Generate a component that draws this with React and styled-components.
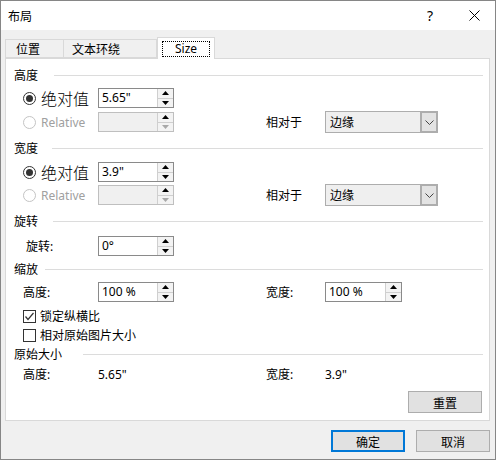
import React from "react";
import styled, { createGlobalStyle } from "styled-components";

const Global = createGlobalStyle`
  html, body { margin: 0; padding: 0; background: #fff; }
  body { font-family: "Noto Sans", "Noto Sans CJK SC", sans-serif; font-size: 12px; color: #000; }
  * { box-sizing: border-box; }
`;

const Window = styled.div`
  width: 496px;
  height: 460px;
  border: 1px solid #868686;
  display: flex;
  flex-direction: column;
  background: #f0f0f0;
`;

const TitleBar = styled.div`
  height: 29px;
  background: #fff;
  display: flex;
  align-items: center;
  padding-left: 7px;
`;

const Title = styled.div`
  font-family: "Noto Sans CJK SC", sans-serif;
  font-size: 12px;
  flex: 1;
`;

const TitleBtn = styled.div`
  width: ${(p) => p.$w}px;
  height: 29px;
  display: flex;
  align-items: center;
  justify-content: center;
  font-size: 14px;
  font-family: "Noto Sans", sans-serif;
`;

const Body = styled.div`
  flex: 1;
  display: flex;
  flex-direction: column;
  padding: 0 5px 0 4px;
`;

const Tabs = styled.div`
  margin-top: 7px;
  height: 21px;
  display: flex;
  align-items: flex-end;
  position: relative;
  z-index: 1;
`;

const Tab = styled.div`
  width: ${(p) => p.$w}px;
  height: ${(p) => (p.$active ? 22 : 19)}px;
  margin-bottom: ${(p) => (p.$active ? -1 : 0)}px;
  background: ${(p) => (p.$active ? "#fff" : "#f0f0f0")};
  border: 1px solid #d9d9d9;
  border-bottom: ${(p) => (p.$active ? "none" : "1px solid #d9d9d9")};
  border-left: ${(p) => (p.$first || p.$active ? "1px solid #d9d9d9" : "none")};
  display: flex;
  align-items: center;
  justify-content: ${(p) => (p.$active ? "center" : "flex-start")};
  padding-left: ${(p) => (p.$active ? 0 : p.$pl)}px;
  padding-top: ${(p) => (p.$active ? 0 : 1)}px;
  font-family: "Noto Sans", "Noto Sans CJK SC", sans-serif;
  font-size: 12px;
`;

const Focus = styled.span`
  border: 1px dotted #000;
  padding: 0 12px;
  height: 16px;
  display: flex;
  align-items: center;
`;

const Panel = styled.div`
  height: 363px;
  background: #fff;
  border: 1px solid #d9d9d9;
  padding: 9px 6px 0 8px;
  display: flex;
  flex-direction: column;
`;

const Header = styled.div`
  height: 14px;
  margin-top: ${(p) => p.$mt || 0}px;
  display: flex;
  align-items: center;
`;

const HeaderText = styled.div`
  width: ${(p) => p.$w}px;
  font-family: "Noto Sans CJK SC", sans-serif;
  font-size: 12px;
  line-height: 14px;
`;

const HeaderLine = styled.div`
  flex: 1;
  height: 1px;
  background: #dcdcdc;
`;

const Row = styled.div`
  display: grid;
  grid-template-columns: 84px 76px 92px 59px 113px;
  align-items: center;
  height: ${(p) => p.$h}px;
  margin-top: ${(p) => p.$mt}px;
`;

const Cell = styled.div`
  display: flex;
  align-items: center;
  padding-left: ${(p) => p.$pl || 0}px;
  grid-column: ${(p) => p.$span || "auto"};
  font-family: "Noto Sans", "Noto Sans CJK SC", sans-serif;
  font-size: 12px;
  color: ${(p) => (p.$dim ? "#a0a0a0" : "#000")};
`;

const Radio = styled.span`
  width: 13px;
  height: 13px;
  border-radius: 50%;
  border: 1px solid ${(p) => (p.$disabled ? "#c4c4c4" : "#333")};
  display: inline-flex;
  align-items: center;
  justify-content: center;
  margin-right: 5px;
  flex: none;
  &::after {
    content: "";
    width: 7px;
    height: 7px;
    border-radius: 50%;
    background: ${(p) => (p.$checked ? "#333" : "transparent")};
  }
`;

const BigLabel = styled.span`
  font-family: "Noto Sans CJK SC", sans-serif;
  font-size: 16px;
  font-weight: 300;
  line-height: 18px;
`;

const Check = styled.span`
  width: 13px;
  height: 13px;
  border: 1px solid #333;
  display: inline-flex;
  align-items: center;
  justify-content: center;
  margin-right: 4px;
  flex: none;
`;

const SpinBox = styled.div`
  width: ${(p) => p.$w || 76}px;
  height: 20px;
  display: flex;
  border: 1px solid ${(p) => (p.$disabled ? "#bfbfbf" : "#8a8a8a")};
  background: ${(p) => (p.$disabled ? "#f0f0f0" : "#fff")};
`;

const SpinValue = styled.div`
  flex: 1;
  padding-left: 3px;
  font-family: "Noto Sans", sans-serif;
  font-size: 12px;
  line-height: 18px;
`;

const SpinButtons = styled.div`
  width: 16px;
  display: flex;
  flex-direction: column;
  border-left: 1px solid #cfcfcf;
  background: #f3f3f3;
`;

const SpinBtn = styled.div`
  flex: 1;
  display: flex;
  align-items: center;
  justify-content: center;
  & + & {
    border-top: 1px solid #cfcfcf;
  }
`;

const Select = styled.div`
  width: 113px;
  height: 22px;
  display: flex;
  border: 1px solid #adadad;
  background: #efefef;
`;

const SelectValue = styled.div`
  flex: 1;
  padding-left: 4px;
  font-family: "Noto Sans CJK SC", sans-serif;
  font-size: 12px;
  line-height: 20px;
`;

const SelectArrow = styled.div`
  width: 18px;
  margin: -1px -1px -1px 0;
  border: 2px solid #adadad;
  background: #e3e3e3;
  display: flex;
  align-items: center;
  justify-content: center;
`;

const ButtonRow = styled.div`
  display: flex;
  justify-content: flex-end;
  gap: 11px;
  margin-top: ${(p) => p.$mt || 0}px;
  padding-right: ${(p) => p.$pr || 0}px;
`;

const Button = styled.div`
  width: ${(p) => p.$w || 74}px;
  height: ${(p) => p.$h || 22}px;
  background: #e1e1e1;
  border: ${(p) => (p.$default ? "2px solid #0078d7" : "1px solid #adadad")};
  display: flex;
  align-items: center;
  justify-content: center;
  font-family: "Noto Sans CJK SC", sans-serif;
  font-size: 12px;
`;

const Up = ({ c = "#000" }) => (
  <svg width="7" height="4" viewBox="0 0 7 4">
    <path d="M0 4 L3.5 0 L7 4 Z" fill={c} />
  </svg>
);
const Down = ({ c = "#000" }) => (
  <svg width="7" height="4" viewBox="0 0 7 4">
    <path d="M0 0 L3.5 4 L7 0 Z" fill={c} />
  </svg>
);

const Spin = ({ value, disabled, w }) => (
  <SpinBox $disabled={disabled} $w={w}>
    <SpinValue>{value}</SpinValue>
    <SpinButtons>
      <SpinBtn>
        <Up />
      </SpinBtn>
      <SpinBtn>
        <Down c={disabled ? "#a8a8a8" : "#000"} />
      </SpinBtn>
    </SpinButtons>
  </SpinBox>
);

const Dropdown = ({ value }) => (
  <Select>
    <SelectValue>{value}</SelectValue>
    <SelectArrow>
      <svg width="9" height="5" viewBox="0 0 9 5">
        <path d="M0.5 0.5 L4.5 4.5 L8.5 0.5" fill="none" stroke="#444" strokeWidth="1" />
      </svg>
    </SelectArrow>
  </Select>
);

const CheckMark = () => (
  <svg width="11" height="11" viewBox="0 0 11 11">
    <path d="M1.5 5.5 L4 8.5 L9.5 2" fill="none" stroke="#333" strokeWidth="1.2" />
  </svg>
);

export default function App() {
  return (
    <>
      <Global />
      <Window>
        <TitleBar>
          <Title>布局</Title>
          <TitleBtn $w={46}>?</TitleBtn>
          <TitleBtn $w={42}>
            <svg width="11" height="11" viewBox="0 0 11 11">
              <path d="M0.5 0.5 L10.5 10.5 M10.5 0.5 L0.5 10.5" stroke="#000" strokeWidth="1" />
            </svg>
          </TitleBtn>
        </TitleBar>
        <Body>
          <Tabs>
            <Tab $w={59} $first $pl={10}>位置</Tab>
            <Tab $w={93} $pl={8}>文本环绕</Tab>
            <Tab $w={58} $active>
              <Focus>Size</Focus>
            </Tab>
          </Tabs>
          <Panel>
            <Header>
              <HeaderText $w={40}>高度</HeaderText>
              <HeaderLine />
            </Header>
            <Row $h={20} $mt={6}>
              <Cell $pl={9}>
                <Radio $checked />
                <BigLabel>绝对值</BigLabel>
              </Cell>
              <Spin value={'5.65"'} />
            </Row>
            <Row $h={22} $mt={3}>
              <Cell $pl={9} $dim>
                <Radio $disabled />
                Relative
              </Cell>
              <Spin value="" disabled />
              <span />
              <Cell>相对于</Cell>
              <Dropdown value="边缘" />
            </Row>

            <Header $mt={8}>
              <HeaderText $w={38}>宽度</HeaderText>
              <HeaderLine />
            </Header>
            <Row $h={20} $mt={7}>
              <Cell $pl={9}>
                <Radio $checked />
                <BigLabel>绝对值</BigLabel>
              </Cell>
              <Spin value={'3.9"'} />
            </Row>
            <Row $h={22} $mt={2}>
              <Cell $pl={9} $dim>
                <Radio $disabled />
                Relative
              </Cell>
              <Spin value="" disabled />
              <span />
              <Cell>相对于</Cell>
              <Dropdown value="边缘" />
            </Row>

            <Header $mt={8}>
              <HeaderText $w={39}>旋转</HeaderText>
              <HeaderLine />
            </Header>
            <Row $h={20} $mt={8}>
              <Cell $pl={12}>旋转:</Cell>
              <Spin value="0°" />
            </Row>

            <Header $mt={6}>
              <HeaderText $w={31}>缩放</HeaderText>
              <HeaderLine />
            </Header>
            <Row $h={20} $mt={6}>
              <Cell $pl={9}>高度:</Cell>
              <Spin value="100 %" />
              <span />
              <Cell>宽度:</Cell>
              <Spin value="100 %" w={77} />
            </Row>
            <Row $h={14} $mt={5}>
              <Cell $pl={9} $span="1 / -1">
                <Check>
                  <CheckMark />
                </Check>
                锁定纵横比
              </Cell>
            </Row>
            <Row $h={14} $mt={5}>
              <Cell $pl={9} $span="1 / -1">
                <Check />
                相对原始图片大小
              </Cell>
            </Row>

            <Header $mt={7}>
              <HeaderText $w={69}>原始大小</HeaderText>
              <HeaderLine />
            </Header>
            <Row $h={16} $mt={4}>
              <Cell $pl={9}>高度:</Cell>
              <Cell>5.65"</Cell>
              <span />
              <Cell>宽度:</Cell>
              <Cell>3.9"</Cell>
            </Row>

            <ButtonRow $mt={10} $pr={1}>
              <Button $w={74} $h={22}>重置</Button>
            </ButtonRow>
          </Panel>
          <ButtonRow $mt={9}>
            <Button $w={74} $h={22} $default>确定</Button>
            <Button $w={74} $h={22}>取消</Button>
          </ButtonRow>
        </Body>
      </Window>
    </>
  );
}
